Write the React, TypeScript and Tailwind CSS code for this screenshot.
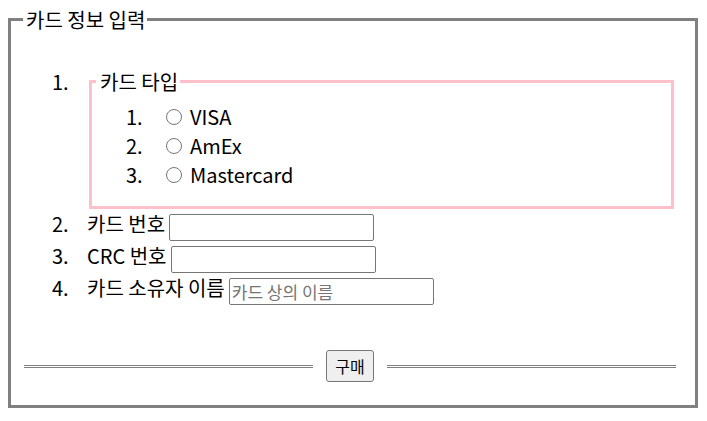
import { useState } from "react";

const cardTypes = ["VISA", "AmEx", "Mastercard"];

export default function App() {
  const [cardType, setCardType] = useState("");

  return (
    <div className="bg-white text-black text-[20px] leading-[29px] font-['Noto_Sans_CJK_KR','Noto_Sans',sans-serif]">
      <form onSubmit={(e) => e.preventDefault()}>
        <fieldset className="ml-[8px] mt-[5px] w-[690px] border-[3px] border-[#808080] pl-[12px] pr-[19px] pb-[23px]">
          <legend className="pl-[3px] pr-[2px]">카드 정보 입력</legend>
          <ol className="mt-[33px]">
            <li className="flex items-start">
              <span className="w-[64px] shrink-0 pl-[29px]">1.</span>
              <fieldset className="mx-[2px] flex-1 border-[3px] border-[#ffc0cb] pl-[4px] pb-[17px]">
                <legend className="pl-[4px] pr-[2px]">카드 타입</legend>
                <ol className="mt-[6px]">
                  {cardTypes.map((t, i) => (
                    <li key={t} className="flex h-[29px] items-center">
                      <span className="w-[70px] shrink-0 pl-[30px]">{i + 1}.</span>
                      <input
                        type="radio"
                        name="cardtype"
                        value={t}
                        checked={cardType === t}
                        onChange={() => setCardType(t)}
                        className="m-0 mr-[8px] h-[16px] w-[16px] appearance-none rounded-full border border-[#767676] bg-white checked:border-[4px] checked:border-[#0075ff]"
                      />
                      <span>{t}</span>
                    </li>
                  ))}
                </ol>
              </fieldset>
            </li>
            <li className="flex h-[32px] items-start">
              <span className="w-[64px] shrink-0 pl-[29px]">2.</span>
              <span>카드 번호</span>
              <input
                type="text"
                className="ml-[4px] mt-[5px] h-[27px] w-[205px] rounded-[2px] border border-[#767676] px-[2px] text-[17px]"
              />
            </li>
            <li className="flex h-[32px] items-start">
              <span className="w-[64px] shrink-0 pl-[29px]">3.</span>
              <span>CRC 번호</span>
              <input
                type="text"
                className="ml-[4px] mt-[5px] h-[27px] w-[205px] rounded-[2px] border border-[#767676] px-[2px] text-[17px]"
              />
            </li>
            <li className="flex h-[32px] items-start">
              <span className="w-[64px] shrink-0 pl-[29px]">4.</span>
              <span>카드 소유자 이름</span>
              <input
                type="text"
                placeholder="카드 상의 이름"
                className="ml-[4px] mt-[5px] h-[27px] w-[205px] rounded-[2px] border border-[#767676] px-[2px] text-[17px] placeholder:text-[#757575]"
              />
            </li>
          </ol>
          <div className="mt-[45px] flex h-[32px] items-center">
            <div className="ml-[1px] flex-1 border-t-[3px] border-double border-[#808080]" />
            <button
              type="submit"
              className="mx-[13px] h-[32px] w-[48px] rounded-[3px] border border-[#767676] bg-[#efefef] text-[16px]"
            >
              구매
            </button>
            <div className="flex-1 border-t-[3px] border-double border-[#808080]" />
          </div>
        </fieldset>
      </form>
    </div>
  );
}
